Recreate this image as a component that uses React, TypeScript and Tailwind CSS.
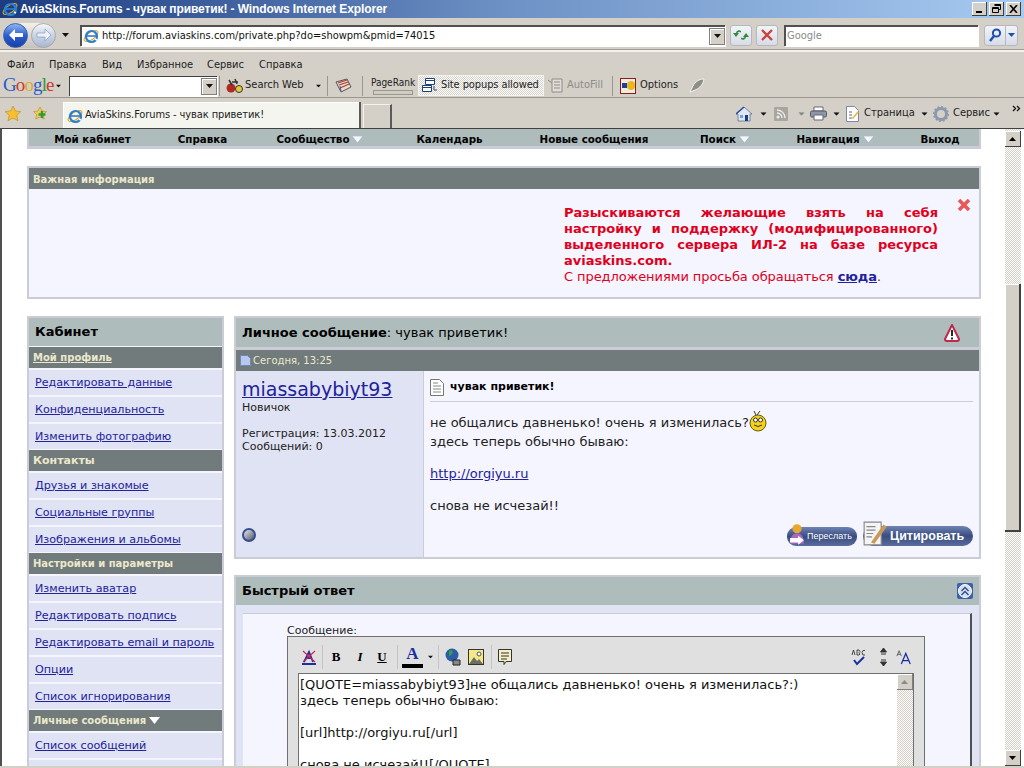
import React from 'react';

const Arrow = ({ className = '' }: { className?: string }) => (
  <svg width="7" height="4" viewBox="0 0 7 4" className={className}><path d="M0 0h7L3.5 4z" fill="#111" /></svg>
);

const NavArrow = () => (
  <svg width="11" height="7" viewBox="0 0 11 7" className="ml-[3px] inline-block"><path d="M0 0h11L5.500 7z" fill="#f5f7ff" stroke="#9aa9c4" strokeWidth="0.6" /></svg>
);

const IeLogo = ({ size = 16 }: { size?: number }) => (
  <svg width={size} height={size} viewBox="0 0 16 16">
    <ellipse cx="8" cy="8" rx="8" ry="3.600" transform="rotate(-35 8 8)" fill="none" stroke="#e0a820" strokeWidth="1.100" />
    <circle cx="8.500" cy="8.500" r="5.500" fill="none" stroke="#2a7fd0" strokeWidth="2.200" />
    <path d="M4 8h9" stroke="#2a7fd0" strokeWidth="1.600" />
    <path d="M12 11l2 1" stroke="#fff" strokeWidth="1.500" />
  </svg>
);

const NavCircle = ({ dir, active }: { dir: 'l' | 'r'; active: boolean }) => (
  <div className={`flex h-[25px] w-[25px] items-center justify-center rounded-full border ${active ? 'border-[#3a5fa8] bg-gradient-to-b from-[#8fb4ee] via-[#2a5fd0] to-[#1a3ea8]' : 'border-[#a8a8a8] bg-gradient-to-b from-[#f4f6fa] via-[#c8d4e6] to-[#aab8d0]'}`}>
    <svg width="16" height="14" viewBox="0 0 16 14">
      <path d={dir === 'l' ? 'M7 1 1 7l6 6V9h8V5H7z' : 'M9 1l6 6-6 6V9H1V5h8z'} fill={active ? '#fff' : '#eef2f8'} stroke={active ? 'none' : '#8fa2bf'} strokeWidth="0.800" />
    </svg>
  </div>
);

const SmallBtn = ({ children, className = '' }: { children: React.ReactNode; className?: string }) => (
  <div className={`flex items-center justify-center rounded-[3px] border border-[#b4b8c4] bg-gradient-to-b from-[#f2f4f8] to-[#d8dce6] ${className}`}>{children}</div>
);

const ComboBtn = () => (
  <div className="flex h-[17px] w-[16px] items-center justify-center border border-[#808080] bg-[#d4d0c8] shadow-[inset_1px_1px_0_#fff]">
    <Arrow />
  </div>
);

const Sep = ({ className = '' }: { className?: string }) => <div className={`h-[20px] w-[1px] bg-[#9a978f] ${className}`} />;

const TitleBar = () => (
  <div className="flex h-[18px] items-center bg-gradient-to-r from-[#1d3b7f] via-[#6f92c6] to-[#a6caf0] pl-[2px] pr-[3px]">
    <IeLogo />
    <span className="ml-[2px] flex-1 font-['Liberation_Sans',sans-serif] text-[12px] font-bold tracking-[-0.1px] text-white">AviaSkins.Forums - чувак приветик! - Windows Internet Explorer</span>
    <div className="flex gap-[2px]">
      {['min', 'max', 'close'].map(k => (
        <div key={k} className="flex h-[14px] w-[15px] items-center justify-center border-r border-b border-[#404040] bg-[#d4d0c8] shadow-[inset_1px_1px_0_#fff]">
          {k === 'min' && <div className="mt-[7px] h-[2px] w-[6px] bg-black" />}
          {k === 'max' && (
            <svg width="9" height="9" viewBox="0 0 9 9"><path d="M2.500.5h6v5h-2M.5 3.500h6v5h-6zM.5 4.500h6M2.500 1.500h6" fill="none" stroke="#000" /></svg>
          )}
          {k === 'close' && (
            <svg width="9" height="8" viewBox="0 0 9 8"><path d="M1 0l7 8M8 0 1 8" stroke="#000" strokeWidth="1.600" /></svg>
          )}
        </div>
      ))}
    </div>
  </div>
);

const AddressRow = () => (
  <div className="flex h-[34px] items-center border-b-2 border-b-[#f4f2ec] pl-[3px] pt-[2px] shadow-[inset_0_-1px_0_#a09c92]">
    <div className="flex items-center rounded-full bg-gradient-to-b from-[#f2f0ec] to-[#c4c2bc]">
      <NavCircle dir="l" active />
      <div className="ml-[3px]"><NavCircle dir="r" active={false} /></div>
    </div>
    <Arrow className="ml-[6px]" />
    <div className="ml-[11px] flex h-[21px] w-[645px] items-center border-t-2 border-l-2 border-t-[#505050] border-l-[#505050] bg-white shadow-[1px_1px_0_#fff]">
      <div className="ml-[1px]"><IeLogo /></div>
      <span className="ml-[3px] flex-1 text-[11px] text-[#111]">http://forum.aviaskins.com/private.php?do=showpm&amp;pmid=74015</span>
      <ComboBtn />
    </div>
    <SmallBtn className="ml-[5px] h-[21px] w-[22px]">
      <svg width="16" height="14" viewBox="0 0 16 14"><path d="M8 3a3 3 0 00-5 2H0l3 4 3-4H4.500C5 4 6.500 3.500 8 4.500zM8 11a3 3 0 005-2h3l-3-4-3 4h1.500c-.500 1-2 1.500-3.500.500z" fill="#2e8b3a" /></svg>
    </SmallBtn>
    <SmallBtn className="ml-[4px] h-[21px] w-[22px]">
      <svg width="12" height="12" viewBox="0 0 12 12"><path d="M1 1l10 10M11 1 1 11" stroke="#c8443c" strokeWidth="2.400" /></svg>
    </SmallBtn>
    <div className="ml-[6px] flex h-[21px] w-[194px] items-center border-t-2 border-l-2 border-t-[#505050] border-l-[#505050] bg-white pl-[1px] text-[11px] text-[#8a8a8a] shadow-[1px_1px_0_#fff]">Google</div>
    <SmallBtn className="ml-[6px] h-[21px] w-[22px] rounded-r-none">
      <svg width="14" height="14" viewBox="0 0 14 14"><circle cx="8.500" cy="5" r="3.600" fill="none" stroke="#1c4fae" strokeWidth="2" /><path d="M6 8l-4 5" stroke="#1c4fae" strokeWidth="2.400" /></svg>
    </SmallBtn>
    <SmallBtn className="h-[21px] w-[12px] rounded-l-none border-l-0">
      <svg width="7" height="4" viewBox="0 0 7 4"><path d="M0 0h7L3.500 4z" fill="#1c4fae" /></svg>
    </SmallBtn>
  </div>
);

const MenuRow = () => (
  <div className="flex h-[21px] items-center pl-[7px] pt-[5px] text-[11px] text-[#222]">
    <span className="w-[42px]">Файл</span>
    <span className="w-[53px]">Правка</span>
    <span className="w-[35px]">Вид</span>
    <span className="w-[70px]">Избранное</span>
    <span className="w-[52px]">Сервис</span>
    <span>Справка</span>
  </div>
);

const GoogleLogo = () => (
  <span className="font-['Liberation_Serif',serif] text-[19px] leading-none tracking-[-0.9px]">
    <span className="text-[#2a5bc8]">G</span><span className="text-[#d0392b]">o</span><span className="text-[#e0a81c]">o</span><span className="text-[#2a5bc8]">g</span><span className="text-[#2e9a3e]">l</span><span className="text-[#d0392b]">e</span>
  </span>
);

const GoogleRow = () => (
  <div className="flex h-[25px] items-center border-b border-b-[#9a978f] pl-[3px] pt-[1px] text-[11px] text-[#222]">
    <div className="w-[52px]"><GoogleLogo /></div>
    <Arrow className="scale-75" />
    <div className="ml-[7px] flex h-[20px] w-[148px] items-center justify-end border-t border-l border-t-[#404040] border-l-[#404040] bg-white shadow-[1px_1px_0_#fff]"><ComboBtn /></div>
    <Sep className="ml-[2px]" />
    <svg width="18" height="16" viewBox="0 0 18 16" className="ml-[6px]">
      <circle cx="5" cy="10" r="4.500" fill="#b02a20" />
      <circle cx="13" cy="11" r="3.500" fill="#e8c838" stroke="#333" />
      <path d="M3 2l3 5M9 1l2 5M6 4h6" stroke="#333" strokeWidth="1.500" />
    </svg>
    <span className="ml-[1px] w-[70px] whitespace-nowrap">Search Web</span>
    <Arrow className="scale-75" />
    <Sep className="ml-[5px]" />
    <svg width="17" height="15" viewBox="0 0 17 15" className="ml-[7px]">
      <path d="M1 4l11-3 4 8-10 5z" fill="#e8dcc8" stroke="#555" />
      <path d="M3 5l9-3M4 7l9-3M5 10l9-4" stroke="#b03a3a" strokeWidth="1.200" />
      <path d="M6 13l-1-5" stroke="#2a5bc8" />
    </svg>
    <Sep className="ml-[10px]" />
    <div className="ml-[8px] flex w-[44px] flex-col items-center">
      <span className="text-[10px] leading-[12px]">PageRank</span>
      <div className="mt-[1px] h-[5px] w-[40px] border border-[#9a978f] bg-[#cfccc4]" />
    </div>
    <div className="ml-[3px] flex h-[21px] w-[126px] items-center border border-[#f4f2ec] bg-[repeating-conic-gradient(#d4d0c8_0_25%,#ffffff_0_50%)] bg-[length:2px_2px] pl-[3px]">
      <svg width="17" height="15" viewBox="0 0 17 15"><path d="M3.500.5h9v6h-9zM.5 7.500h9v6h-9zM3.500 2.500h9M.5 9.500h9M12 8v4h3" fill="#fff" stroke="#1e3f7e" /></svg>
      <span className="ml-[2px] whitespace-nowrap tracking-[-0.1px]">Site popups allowed</span>
    </div>
    <svg width="17" height="15" viewBox="0 0 17 15" className="ml-[3px]"><path d="M5 1h10v13H5zM7 4h6M7 7h6M7 10h6M1 2l4 3" fill="#e0ddd6" stroke="#8f8c85" /></svg>
    <span className="ml-[3px] w-[39px] text-[#8f8c85]">AutoFill</span>
    <Sep className="ml-[6px]" />
    <div className="ml-[7px] flex h-[16px] w-[16px] items-center justify-center border border-[#8a1c1c] bg-[#f0ece2]">
      <div className="h-[5px] w-[5px] bg-[#2040a0]" />
      <div className="h-[9px] w-[8px] rounded-full bg-[#e8b820]" />
    </div>
    <span className="ml-[4px] w-[49px]">Options</span>
    <svg width="16" height="15" viewBox="0 0 16 15"><path d="M1 14 4 8c2-4 6-7 11-7-1 5-4 9-9 11z" fill="#8e8c86" stroke="#fff" strokeWidth="0.800" /></svg>
  </div>
);

const TabRow = () => (
  <div className="flex h-[30px] items-end pl-[5px] text-[11px] text-[#222]">
    <div className="flex h-[28px] w-[58px] items-center self-center">
      <svg width="16" height="15" viewBox="0 0 16 15"><path d="M8 0l2.400 5 5.400.6-4 3.700 1.100 5.400L8 12l-4.900 2.700 1.100-5.400-4-3.700L5.600 5z" fill="#f8c030" stroke="#b88a18" strokeWidth="0.600" /></svg>
      <svg width="16" height="15" viewBox="0 0 16 15" className="ml-[11px]"><path d="M8 1l2 4 4.500.6-3.200 3 .9 4.400L8 11l-4.200 2 .9-4.400-3.200-3L6 5z" fill="#f0cc50" stroke="#b88a18" strokeWidth="0.600" /><path d="M10 5v7M6.500 8.500h7" stroke="#2e9a3e" strokeWidth="2.400" /></svg>
    </div>
    <div className="flex h-[26px] w-[298px] items-center border-r-2 border-r-[#5a5a5a] bg-[#f5f5ef] pl-[4px] pt-[1px] shadow-[inset_1px_1px_0_#fff]">
      <IeLogo />
      <span className="ml-[2px] tracking-[-0.1px]">AviaSkins.Forums - чувак приветик!</span>
    </div>
    <div className="ml-[2px] h-[24px] w-[29px] border-t border-l border-r-2 border-t-[#f4f2ec] border-l-[#f4f2ec] border-r-[#5a5a5a]" />
    <div className="flex h-[28px] flex-1 items-center self-center pl-[344px] pt-[1px]">
      <svg width="16" height="16" viewBox="0 0 16 16"><path d="M8 1 0 8h2v7h12V8h2z" fill="#dfe7f2" stroke="#5a6f94" strokeWidth="0.800" /><path d="M8 1 0 8" stroke="#2a4a9a" strokeWidth="1.400" /><path d="M9 9h3v6H9z" fill="#1c3a8a" /><path d="M4 9h3v3H4z" fill="#6fa0dc" /></svg>
      <Arrow className="ml-[8px] scale-90" />
      <svg width="15" height="14" viewBox="0 0 15 14" className="ml-[7px]"><rect width="14" height="14" rx="1" fill="#a8a69f" /><circle cx="4" cy="10" r="1.500" fill="#eee" /><path d="M3 6a5 5 0 015 5M3 3a8 8 0 018 8" fill="none" stroke="#eee" strokeWidth="1.300" /></svg>
      <Arrow className="ml-[9px] scale-90 opacity-40" />
      <svg width="17" height="15" viewBox="0 0 17 15" className="ml-[5px]"><path d="M4 1h9v4H4z" fill="#fff" stroke="#667" /><rect x="0.500" y="5" width="16" height="6" rx="1.500" fill="#8b98a8" stroke="#556" /><path d="M4 9h9v5H4z" fill="#fff" stroke="#667" /></svg>
      <Arrow className="ml-[6px] scale-90" />
      <svg width="14" height="16" viewBox="0 0 14 16" className="ml-[6px]"><path d="M.5.5h8l4 4v11H.5z" fill="#fff" stroke="#7a8aa4" /><path d="M3 6h3M3 9h3M3 12h3" stroke="#667" /><path d="M6 12l6-7 1 1-6 7z" fill="#e8b030" /></svg>
      <span className="ml-[4px] w-[55px]">Страница</span>
      <Arrow className="ml-[2px] scale-90" />
      <svg width="16" height="16" viewBox="0 0 16 16" className="ml-[5px]"><circle cx="8" cy="8" r="5.500" fill="none" stroke="#8a99ae" strokeWidth="3" /><circle cx="8" cy="8" r="7.300" fill="none" stroke="#8a99ae" strokeWidth="1.400" strokeDasharray="2 1.800" /></svg>
      <span className="ml-[4px] w-[40px]">Сервис</span>
      <Arrow className="scale-90" />
      <svg width="9" height="7" viewBox="0 0 9 7" className="-mt-[10px] ml-[12px]"><path d="M1 1l2.500 2.500L1 6M5 1l2.500 2.500L5 6" fill="none" stroke="#111" strokeWidth="1.300" /></svg>
    </div>
  </div>
);

const Panel = ({ children, className = '' }: { children: React.ReactNode; className?: string }) => (
  <div className={`border-2 border-[#ccccd9] ${className}`}>{children}</div>
);

const SideHead = ({ children, className = 'text-[10px]' }: { children: React.ReactNode; className?: string }) => (
  <div className={`mt-[1px] flex h-[21px] items-center bg-[#717b7b] pl-[4px] font-bold text-[#ece8cc] ${className}`}>{children}</div>
);

const SideLink = ({ children }: { children: React.ReactNode }) => (
  <div className="flex h-[27px] items-center border-t-2 border-[#f5f5ff] bg-[#e0e3f3] pl-[6px] pt-[1px] text-[11.150px]">
    <a className="text-[#22229c] underline">{children}</a>
  </div>
);

const Sidebar = () => (
  <Panel className="h-[500px] w-[197px] shrink-0 overflow-hidden bg-[#f5f5ff]">
    <div className="flex h-[28px] items-center bg-[#aebcbc] pl-[6px] text-[13px] font-bold text-black">Кабинет</div>
    <SideHead><span className="text-[#ece8cc] underline">Мой профиль</span></SideHead>
    <SideLink>Редактировать данные</SideLink>
    <SideLink>Конфиденциальность</SideLink>
    <SideLink>Изменить фотографию</SideLink>
    <SideHead className="pt-[1px] text-[11px]">Контакты</SideHead>
    <SideLink>Друзья и знакомые</SideLink>
    <SideLink>Социальные группы</SideLink>
    <SideLink>Изображения и альбомы</SideLink>
    <SideHead>Настройки и параметры</SideHead>
    <SideLink>Изменить аватар</SideLink>
    <SideLink>Редактировать подпись</SideLink>
    <SideLink>Редактировать email и пароль</SideLink>
    <SideLink>Опции</SideLink>
    <SideLink>Список игнорирования</SideLink>
    <SideHead>
      Личные сообщения
      <svg width="11" height="7" viewBox="0 0 11 7" className="ml-[3px]"><path d="M0 0h11L5.500 7z" fill="#fff" /></svg>
    </SideHead>
    <SideLink>Список сообщений</SideLink>
    <SideLink>{''}</SideLink>
  </Panel>
);

const Smiley = () => (
  <svg width="18" height="22" viewBox="0 0 18 22" className="inline-block align-[-5px]">
    <path d="M7 5 5 1M8 5l3-4" stroke="#333" />
    <circle cx="9" cy="13" r="8" fill="#f4d21c" stroke="#6a5a10" />
    <circle cx="6.500" cy="10" r="2" fill="#fff" stroke="#333" />
    <circle cx="11.500" cy="10" r="2" fill="#fff" stroke="#333" />
    <path d="M5 15q4 3 8 0" fill="none" stroke="#333" />
  </svg>
);

const Message = () => (
  <Panel className="h-[243px] bg-[#ccccd9]">
    <div className="flex h-[29px] items-center bg-[#aebcbc] pl-[6px] pr-[19px] text-[13px] text-black">
      <span className="flex-1"><b>Личное сообщение</b>: чувак приветик!</span>
      <svg width="16" height="18" viewBox="0 0 16 18"><path d="M8 1 1 15q0 2 2 2h10q2 0 2-2z" fill="#fff" stroke="#c0284c" strokeWidth="2" /><path d="M8 6v6M8 13.500v2" stroke="#111" strokeWidth="1.800" /></svg>
    </div>
    <div className="mt-[3px] flex h-[21px] items-center bg-[#717b7b] pl-[4px] text-[10px] text-[#ece8cc]">
      <svg width="11" height="11" viewBox="0 0 11 11"><path d="M.5.5h7l3 3v7H.5z" fill="#b8c8ec" stroke="#7088c0" /></svg>
      <span className="ml-[2px]">Сегодня, 13:25</span>
    </div>
    <div className="flex h-[186px]">
      <div className="flex w-[187px] shrink-0 flex-col bg-[#e0e3f3] pl-[6px] text-[11px] leading-[13px] text-[#222]">
        <a className="mt-[6px] text-[19px] leading-[24px] text-[#22229c] underline">miassabybiyt93</a>
        <span>Новичок</span>
        <span className="mt-[13px]">Регистрация: 13.03.2012</span>
        <span>Сообщений: 0</span>
        <div className="mt-[75px] h-[14px] w-[14px] rounded-full border-2 border-[#34508a] bg-gradient-to-br from-[#e8e8f0] to-[#555a6a]" />
      </div>
      <div className="flex flex-1 flex-col border-l border-[#ccccd9] bg-[#f5f5ff] px-[6px] text-[13px] text-[#222]">
        <div className="flex h-[31px] items-center border-b border-[#ccccd9] pt-[3px] text-[11px] font-bold text-black">
          <svg width="14" height="17" viewBox="0 0 14 17"><path d="M.5.5h9l4 4v12H.5z" fill="#fff" stroke="#777" /><path d="M3 4h5M3 7h8M3 10h8M3 13h8" stroke="#888" /></svg>
          <span className="ml-[6px]">чувак приветик!</span>
        </div>
        <div className="mt-[8px] h-[22px] leading-[22px]">не общались давненько! очень я изменилась?<Smiley /></div>
        <div className="leading-[20px]">здесь теперь обычно бываю:</div>
        <a className="mt-[12px] leading-[20px] text-[#22229c] underline">http://orgiyu.ru</a>
        <div className="mt-[12px] leading-[20px]">снова не исчезай!!</div>
        <div className="mt-[10px] flex items-end justify-end gap-[6px]">
          <div className="flex h-[19px] w-[70px] items-center rounded-[9px] bg-gradient-to-b from-[#6f83b4] via-[#3a4d80] to-[#5a6c9c] font-['Liberation_Sans',sans-serif] text-[9px] text-white">
            <svg width="20" height="23" viewBox="0 0 16 20" className="-mt-[5px] shrink-0"><circle cx="8" cy="5" r="4" fill="#e8a830" /><path d="M2 18q0-9 6-9t6 9z" fill="#a868c0" /><path d="M2 13h7v-2l5 4-5 4v-2H2z" fill="#fff" /></svg>
            <span>Переслать</span>
          </div>
          <div className="flex h-[20px] w-[110px] items-center rounded-[10px] bg-gradient-to-b from-[#6f83b4] via-[#3a4d80] to-[#5a6c9c] font-['Liberation_Sans',sans-serif] text-[12.500px] font-bold text-white">
            <svg width="25" height="25" viewBox="0 0 22 22" className="-mt-[5px] shrink-0"><path d="M1 1h15v20H1z" fill="#f4f4f4" stroke="#888" /><path d="M3 5h8M3 8h8M3 11h6M3 14h5" stroke="#888" /><path d="M7 19 18 3l3 2L10 20z" fill="#c89a5a" /></svg>
            <span className="ml-[2px]">Цитировать</span>
          </div>
        </div>
      </div>
    </div>
  </Panel>
);

const ToolBtn = ({ children, className = '' }: { children: React.ReactNode; className?: string }) => (
  <div className={`flex h-[20px] items-center justify-center ${className}`}>{children}</div>
);

const ToolSep = ({ className = '' }: { className?: string }) => <div className={`h-[24px] w-[1px] bg-[#c4c4c4] ${className}`} />;

const QuickReply = () => (
  <Panel className="mt-[16px] h-[300px] bg-[#e0e3f3]">
    <div className="flex h-[28px] items-center bg-[#aebcbc] pl-[6px] pr-[6px] text-[13px] font-bold text-black">
      <span className="flex-1">Быстрый ответ</span>
      <svg width="16" height="16" viewBox="0 0 16 16"><rect width="16" height="16" rx="2" fill="#3a62a8" /><circle cx="8" cy="8" r="6.500" fill="#d8e0f0" stroke="#fff" /><path d="M4.500 8 8 4.500 11.500 8M4.500 12 8 8.500 11.500 12" fill="none" stroke="#2a4a8a" strokeWidth="1.300" /></svg>
    </div>
    <div className="ml-[7px] mr-[7px] mt-[8px] h-[200px] border-t border-r-2 border-t-[#ccccd9] border-r-[#505050] bg-[#f5f5ff] pl-[44px] pt-[10px]">
      <div className="text-[11px] leading-[13px] text-[#222]">Сообщение:</div>
      <div className="mt-[-1px] w-[638px] border border-[#707070] bg-[#e0e0e0] px-[10px]">
        <div className="flex h-[36px] items-center pt-[4px] pr-[2px]">
          <svg width="16" height="16" viewBox="0 0 16 16" className="ml-[3px]"><path d="M3 13 8 3l4 10M5 9h5M1 15h14" fill="none" stroke="#1c2fa0" strokeWidth="1.800" /><path d="M2 2l12 11M14 2 2 13" stroke="#d02050" strokeWidth="1.100" /></svg>
          <ToolSep className="ml-[5px]" />
          <ToolBtn className="ml-[2px] w-[22px] font-['Liberation_Serif',serif] text-[13px] font-bold text-black">B</ToolBtn>
          <ToolBtn className="ml-[2px] w-[22px] font-['Liberation_Serif',serif] text-[13px] font-bold italic text-black">I</ToolBtn>
          <ToolBtn className="w-[22px] font-['Liberation_Serif',serif] text-[13px] font-bold text-black underline">U</ToolBtn>
          <ToolSep className="ml-[4px]" />
          <div className="ml-[5px] flex h-[26px] w-[19px] flex-col items-center">
            <span className="font-['Liberation_Serif',serif] text-[17px] font-bold leading-[20px] text-[#1c2fa0]">A</span>
            <div className="h-[4px] w-[21px] shrink-0 bg-black" />
          </div>
          <Arrow className="ml-[5px] scale-75" />
          <ToolSep className="ml-[4px]" />
          <svg width="16" height="18" viewBox="0 0 16 18" className="ml-[6px]"><circle cx="7" cy="7" r="6.500" fill="#2a5ca8" /><path d="M4 3c3-2 5 1 3 3S3 8 4 11" fill="#3e9a48" /><path d="M8 12h7v5H8z" fill="#888" stroke="#222" /></svg>
          <svg width="16" height="16" viewBox="0 0 16 16" className="ml-[7px]"><rect x="0.500" y="0.500" width="15" height="15" fill="#f4e88a" stroke="#333" /><circle cx="11" cy="5" r="2" fill="#f8f8f8" stroke="#555" /><path d="M1 15l5-7 3 4 2-2 4 5z" fill="#6a7060" /></svg>
          <ToolSep className="ml-[7px]" />
          <svg width="14" height="17" viewBox="0 0 14 17" className="ml-[6px]"><path d="M.5.5h13v12H8l-2 3v-3H.5z" fill="#f4f0c4" stroke="#333" /><path d="M3 4h8M3 7h8M3 10h6" stroke="#333" /></svg>
          <div className="flex-1" />
          <svg width="16" height="17" viewBox="0 0 16 17"><path d="M3 11l3 4 7-7" fill="none" stroke="#1c2fa0" strokeWidth="2" /><path d="M1 6l1.500-5L4 6M6 1v5h2l1-1-1-1.500 1-1L8 1zM14 1.500h-2l-1 2 1 2.500h2" fill="none" stroke="#222" strokeWidth="0.800" /></svg>
          <svg width="7" height="18" viewBox="0 0 7 18" className="ml-[13px]"><path d="M3.500 0l3 4h-6zM3.500 18l3-4h-6zM1 6h5M1 12h5" stroke="#333" fill="#333" /></svg>
          <svg width="16" height="18" viewBox="0 0 18 18" className="ml-[9px]"><path d="M1 8l2.500-6L6 8M2 6h3" fill="none" stroke="#555" /><path d="M6 17l5-12 5 12M8 13h6" fill="none" stroke="#1c2fa0" strokeWidth="1.400" /></svg>
        </div>
        <div className="flex h-[110px] border border-[#707070] bg-white">
          <div className="flex-1 px-[1px] text-[13px] leading-[16px] text-[#111]">
            <div className="mt-[3px] h-[16px]">[QUOTE=miassabybiyt93]не общались давненько! очень я изменилась?:)</div>
            <div className="h-[16px]">здесь теперь обычно бываю:</div>
            <div className="h-[16px]" />
            <div className="h-[16px]">[url]http://orgiyu.ru[/url]</div>
            <div className="h-[16px]" />
            <div className="h-[16px]">снова не исчезай!![/QUOTE]</div>
          </div>
          <div className="flex w-[16px] flex-col bg-[repeating-conic-gradient(#d4d0c8_0_25%,#ffffff_0_50%)] bg-[length:2px_2px]">
            <div className="flex h-[16px] items-center justify-center border-r border-b border-[#808080] bg-[#d4d0c8] shadow-[inset_1px_1px_0_#fff]">
              <svg width="7" height="4" viewBox="0 0 7 4"><path d="M0 4h7L3.500 0z" fill="#8a8a8a" /></svg>
            </div>
          </div>
        </div>
      </div>
    </div>
  </Panel>
);

const PageScrollbar = () => (
  <div className="ml-[24px] flex w-[16px] shrink-0 flex-col bg-[repeating-conic-gradient(#d4d0c8_0_25%,#ffffff_0_50%)] bg-[length:2px_2px]">
    <div className="mt-[2px] flex h-[16px] items-center justify-center border-r border-b border-[#404040] bg-[#d4d0c8] shadow-[inset_1px_1px_0_#fff]">
      <svg width="7" height="4" viewBox="0 0 7 4"><path d="M0 4h7L3.500 0z" fill="#000" /></svg>
    </div>
    <div className="mt-[137px] h-[248px] border-r-2 border-b-2 border-[#404040] bg-[#d4d0c8] shadow-[inset_1px_1px_0_#fff]" />
    <div className="flex-1" />
    <div className="flex h-[16px] items-center justify-center border-r border-b border-[#404040] bg-[#d4d0c8] shadow-[inset_1px_1px_0_#fff]">
      <svg width="7" height="4" viewBox="0 0 7 4"><path d="M0 0h7L3.500 4z" fill="#000" /></svg>
    </div>
  </div>
);

const navItems: { label: string; arrow?: boolean; width: string }[] = [
  { label: 'Мой кабинет', width: 'w-[127px]' },
  { label: 'Справка', width: 'w-[93px]' },
  { label: 'Сообщество', arrow: true, width: 'w-[142px]' },
  { label: 'Календарь', width: 'w-[117px]' },
  { label: 'Новые сообщения', width: 'w-[172px]' },
  { label: 'Поиск', arrow: true, width: 'w-[90px]' },
  { label: 'Навигация', arrow: true, width: 'w-[130px]' },
  { label: 'Выход', width: 'w-[80px]' },
];

export default function App() {
  return (
    <div className="flex h-[768px] w-[1024px] flex-col overflow-hidden bg-[#d4d0c8] font-['DejaVu_Sans',sans-serif] [font-stretch:condensed]">
      <TitleBar />
      <AddressRow />
      <MenuRow />
      <GoogleRow />
      <TabRow />
      <div className="mb-[2px] flex min-h-0 flex-1 overflow-hidden border-t border-l-2 border-t-[#404040] border-l-[#505050] bg-white [font-stretch:normal]">
        <div className="ml-[25px] w-[954px] shrink-0">
          <div className="flex h-[20px] items-center border-x-2 border-b-[3px] border-[#ccccd9] bg-[#aebcbc] pt-[4px] text-[10.300px] font-bold text-black">
            {navItems.map(n => (
              <div key={n.label} className={`flex shrink-0 items-center justify-center ${n.width}`}>
                {n.label}
                {n.arrow && <NavArrow />}
              </div>
            ))}
          </div>
          <Panel className="mt-[17px] h-[133px] bg-[#f5f5ff]">
            <div className="flex h-[21px] items-center bg-[#717b7b] pl-[4px] pt-[1px] text-[10px] font-bold text-[#ece8cc]">Важная информация</div>
            <div className="flex pl-[535px] pt-[16px]">
              <div className="w-[374px] text-[13px] leading-[16px] text-[#e0001c]">
                <div className="font-bold [text-align-last:justify]">Разыскиваются желающие взять на себя</div>
                <div className="font-bold [text-align-last:justify]">настройку и поддержку (модифицированного)</div>
                <div className="font-bold [text-align-last:justify]">выделенного сервера ИЛ-2 на базе ресурса</div>
                <div className="font-bold">aviaskins.com.</div>
                <div className="tracking-[-0.08px]">С предложениями просьба обращаться <a className="font-bold text-[#22229c] underline">сюда</a>.</div>
              </div>
              <svg width="14" height="14" viewBox="0 0 14 14" className="-mt-[7px] ml-[19px]"><path d="M2 2l10 10M12 2 2 12" stroke="#e85858" strokeWidth="3.600" /></svg>
            </div>
          </Panel>
          <div className="mt-[17px] flex gap-[10px]">
            <Sidebar />
            <div className="w-[747px] shrink-0">
              <Message />
              <QuickReply />
            </div>
          </div>
        </div>
        <PageScrollbar />
      </div>
    </div>
  );
}
